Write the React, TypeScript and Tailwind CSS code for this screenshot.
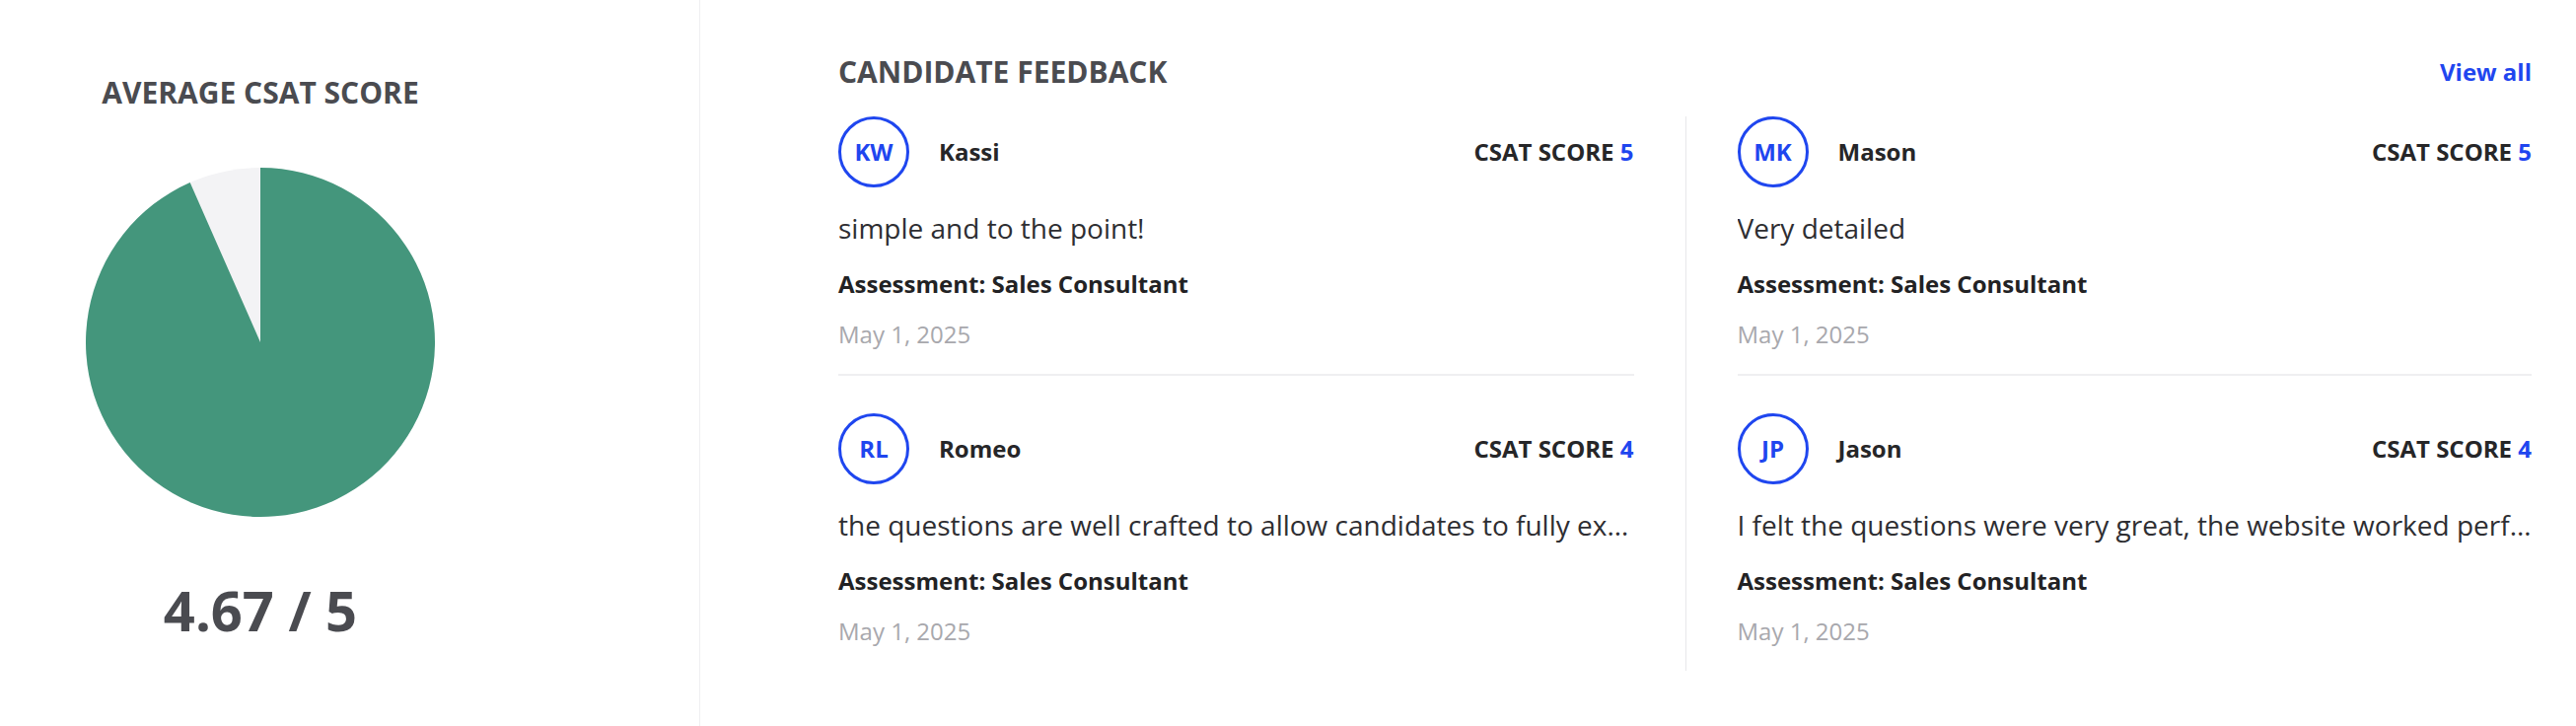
import React from 'react';

type Feedback = {
  initials: string;
  name: string;
  score: number;
  comment: string;
  assessment: string;
  date: string;
};

const columns: Feedback[][] = [
  [
    { initials: 'KW', name: 'Kassi', score: 5, comment: 'simple and to the point!', assessment: 'Sales Consultant', date: 'May 1, 2025' },
    { initials: 'RL', name: 'Romeo', score: 4, comment: 'the questions are well crafted to allow candidates to fully express their experience and skills', assessment: 'Sales Consultant', date: 'May 1, 2025' },
  ],
  [
    { initials: 'MK', name: 'Mason', score: 5, comment: 'Very detailed', assessment: 'Sales Consultant', date: 'May 1, 2025' },
    { initials: 'JP', name: 'Jason', score: 4, comment: 'I felt the questions were very great, the website worked perfectly and smoothly', assessment: 'Sales Consultant', date: 'May 1, 2025' },
  ],
];

const average = 4.67;

const PieChart: React.FC<{ value: number; max: number }> = ({ value, max }) => {
  const r = 177;
  const angle = (value / max) * 2 * Math.PI;
  const x = r + r * Math.sin(angle);
  const y = r - r * Math.cos(angle);
  return (
    <svg width={354} height={354} viewBox="0 0 354 354">
      <circle cx={r} cy={r} r={r} fill="#f3f3f5" />
      <path d={`M${r} ${r} L${r} 0 A${r} ${r} 0 1 1 ${x} ${y} Z`} fill="#44967c" />
    </svg>
  );
};

const FeedbackItem: React.FC<{ item: Feedback; first: boolean }> = ({ item, first }) => (
  <div className={first ? 'pb-[24px] border-b-2 border-[#efeff1]' : 'pt-[38px] pb-[24px]'}>
    <div className="flex items-center h-[72px]">
      <div className="w-[72px] h-[72px] rounded-full border-[3px] border-[#1f46ef] flex items-center justify-center text-[24px] font-bold text-[#1f46ef] shrink-0">
        {item.initials}
      </div>
      <div className="ml-[30px] text-[24px] font-bold text-[#262628]">{item.name}</div>
      <div className="ml-auto text-[24px] font-bold text-[#262628]">
        CSAT SCORE <span className="text-[#1f46ef]">{item.score}</span>
      </div>
    </div>
    <p className="mt-[21px] text-[28px] leading-[40px] text-[#2e2e32] truncate">{item.comment}</p>
    <p className="mt-[21px] text-[24px] leading-[32px] font-bold text-[#222224]">Assessment: {item.assessment}</p>
    <p className="mt-[19px] text-[24px] leading-[32px] text-[#a8a8ad]">{item.date}</p>
  </div>
);

export default function App() {
  return (
    <div className="flex w-[2612px] h-[736px] bg-white font-['Open_Sans',sans-serif]">
      <div className="w-[710px] shrink-0 border-r border-[#efeff1]">
        <div className="w-[528px] flex flex-col items-center pt-[76px]">
          <h2 className="text-[30px] leading-[36px] font-bold text-[#4a4b50]">AVERAGE CSAT SCORE</h2>
          <div className="mt-[58px]">
            <PieChart value={average} max={5} />
          </div>
          <div className="mt-[62px] text-[56px] leading-[64px] font-bold text-[#4a4b50]">{average} / 5</div>
        </div>
      </div>

      <div className="flex-1 pl-[140px] pr-[45px] pt-[55px]">
        <div className="flex items-center justify-between h-[36px]">
          <h2 className="text-[30px] leading-[36px] font-bold text-[#4a4b50]">CANDIDATE FEEDBACK</h2>
          <a className="text-[24px] leading-[32px] font-bold text-[#1f46ef]">View all</a>
        </div>
        <div className="mt-[27px] grid grid-cols-2">
          {columns.map((col, ci) => (
            <div key={ci} className={ci === 0 ? 'pr-[52px] min-w-0' : 'pl-[52px] border-l border-[#e8e8ea] min-w-0'}>
              {col.map((item, i) => (
                <FeedbackItem key={item.initials} item={item} first={i === 0} />
              ))}
            </div>
          ))}
        </div>
      </div>
    </div>
  );
}
